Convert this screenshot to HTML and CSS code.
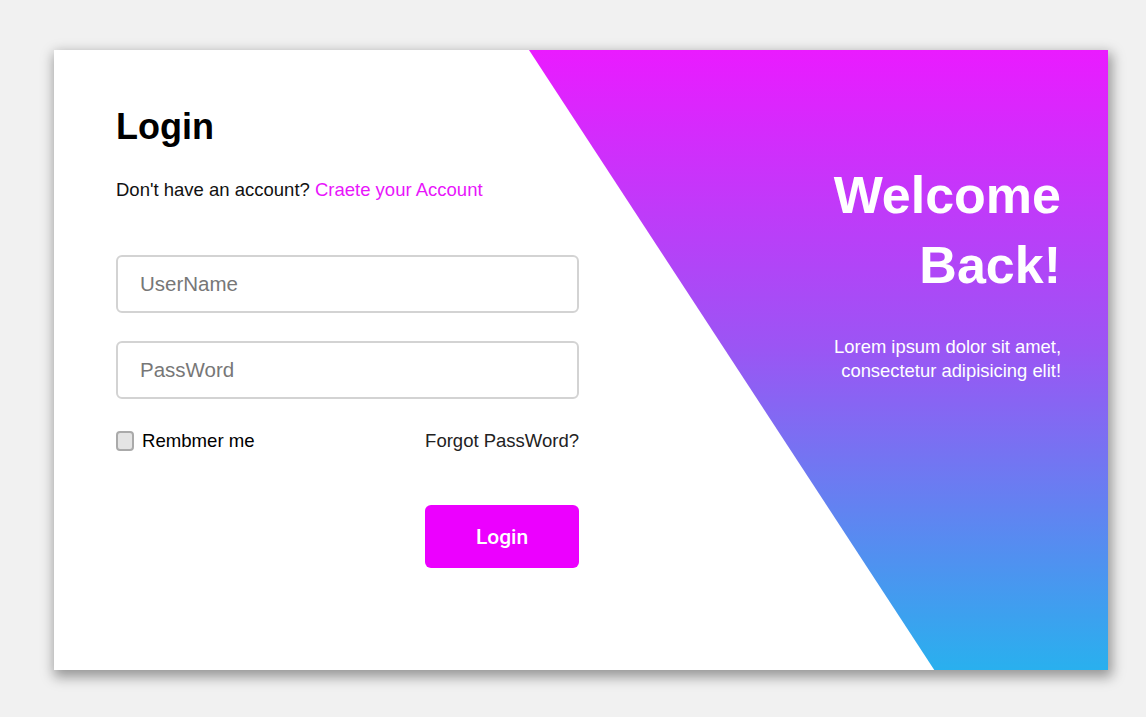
FILE: index.html
```html
<!DOCTYPE html>
<html lang="en">
<head>
<meta charset="utf-8">
<title>Login</title>
<link rel="stylesheet" href="styles.css">
</head>
<body>
<main class="card">
  <section class="form-side">
    <h1 class="title">Login</h1>
    <p class="signup">Don't have an account? <a class="signup-link" href="#">Craete your Account</a></p>
    <form class="form">
      <input class="field" type="text" placeholder="UserName">
      <input class="field" type="password" placeholder="PassWord">
      <div class="options">
        <label class="remember"><input class="check" type="checkbox"> Rembmer me</label>
        <a class="forgot" href="#">Forgot PassWord?</a>
      </div>
      <button class="btn" type="button">Login</button>
    </form>
  </section>
  <aside class="welcome">
    <h2 class="welcome-title">Welcome<br>Back!</h2>
    <p class="welcome-text">Lorem ipsum dolor sit amet,<br>consectetur adipisicing elit!</p>
  </aside>
</main>
</body>
</html>
```

FILE: styles.css
```css
* { box-sizing: border-box; }

html, body { height: 100%; }

body {
  margin: 0;
  padding: 50px 0 0 54px;
  background: #f1f1f1;
  font-family: "Liberation Sans", Arial, sans-serif;
}

.card {
  display: grid;
  grid-template-columns: 1fr;
  width: 1054px;
  height: 620px;
  background: #fff;
  box-shadow: 2px 5px 12px 2px rgba(0, 0, 0, 0.38);
}

.form-side,
.welcome {
  grid-area: 1 / 1;
}

.form-side {
  width: 525px;
  padding: 56px 0 0 62px;
  z-index: 1;
}

.title {
  margin: 0;
  font-size: 36px;
  line-height: 42px;
  font-weight: 700;
  color: #000;
}

.signup {
  margin: 31px 0 0;
  font-size: 18.5px;
  line-height: 22px;
  color: #111;
}

.signup-link {
  color: #e815fb;
  text-decoration: none;
}

.form {
  display: flex;
  flex-direction: column;
  margin-top: 54px;
}

.field {
  height: 58px;
  width: 463px;
  border: 2px solid #d3d3d3;
  border-radius: 6px;
  padding: 0 0 0 22px;
  font-family: "Liberation Sans", Arial, sans-serif;
  font-size: 20.5px;
  color: #333;
  outline: none;
}

.field + .field { margin-top: 28px; }

.field::placeholder { color: #777; }

.options {
  display: flex;
  justify-content: space-between;
  align-items: center;
  margin-top: 30px;
  height: 24px;
  font-size: 18.6px;
  line-height: 24px;
}

.remember {
  display: flex;
  align-items: center;
  gap: 8px;
  color: #000;
}

.check {
  appearance: none;
  -webkit-appearance: none;
  margin: 0;
  width: 18px;
  height: 20px;
  border: 2px solid #aaa;
  border-radius: 4px;
  background: #e4e4e4;
}

.forgot {
  color: #222;
  text-decoration: none;
  font-size: 18.5px;
}

.btn {
  align-self: flex-end;
  margin-top: 52px;
  width: 154px;
  height: 63px;
  border: none;
  border-radius: 6px;
  background: #ec00ff;
  color: #fff;
  font-family: Roboto, "Liberation Sans", sans-serif;
  font-size: 21px;
  font-weight: 500;
}

.welcome {
  margin-left: 475px;
  padding: 110px 47px 0 0;
  text-align: right;
  color: #fff;
  background: linear-gradient(180deg, #ea1bff 0%, #9b55f4 48%, #29b0ee 100%);
  clip-path: polygon(0 0, 100% 0, 100% 100%, 70% 100%);
}

.welcome-title {
  margin: 0;
  font-size: 52px;
  line-height: 70px;
  font-weight: 700;
}

.welcome-text {
  margin: 35px 0 0;
  font-size: 18.4px;
  line-height: 24px;
}
```
